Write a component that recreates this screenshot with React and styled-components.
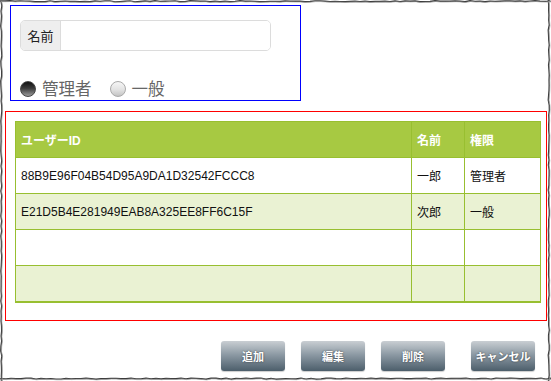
// Imports
import styled, {createGlobalStyle} from 'styled-components'


// Data
const users = [
    {id: '88B9E96F04B54D95A9DA1D32542FCCC8', name: '一郎', role: '管理者'},
    {id: 'E21D5B4E281949EAB8A325EE8FF6C15F', name: '次郎', role: '一般'},
    {id: '', name: '', role: ''},
    {id: '', name: '', role: ''},
]

const buttons = ['追加', '編集', '削除', 'キャンセル']


// Torn paper edge of the screenshot
const jitter = (i, seed) => Math.abs(Math.sin(i * 12.9898 + seed * 78.233) * 43758.5453 % 1)
const tornPath = (w, h) => {
    const pts = []
    const step = 5
    for (let x = 0; x <= w; x += step) pts.push([x, 0.8 + jitter(x, 1) * 1.1])
    for (let y = 0; y <= h; y += step) pts.push([w - 1.6 - jitter(y, 2) * 1.1, y])
    for (let x = w; x >= 0; x -= step) pts.push([x, h - 1.8 - jitter(x, 3) * 1.1])
    for (let y = h; y >= 0; y -= step) pts.push([0.8 + jitter(y, 4) * 1.1, y])
    return 'M' + pts.map(p => p[0].toFixed(1) + ' ' + p[1].toFixed(1)).join(' L') + ' Z'
}


// Styles
const GlobalStyle = createGlobalStyle`
    html, body {
        margin:0;
        padding:0;
        background:#fff;
    }
    * {
        box-sizing:border-box;
    }
`
const Frame = styled.div`
    position:relative;
    width:551px;
    height:381px;
    background:#fff;
    overflow:hidden;
    font-family:"Liberation Sans", "Noto Sans CJK JP", sans-serif;
    padding-top:5px;
`
const Edge = styled.svg`
    position:absolute;
    inset:0;
    pointer-events:none;
`
const FormBox = styled.div`
    margin-left:10px;
    width:291px;
    height:96px;
    border:1px solid #0000ff;
    padding:14px 0 0 9px;
`
const InputGroup = styled.div`
    display:flex;
    width:251px;
    height:31px;
    border:1px solid #dcdcdc;
    border-radius:5px;
    overflow:hidden;
`
const Addon = styled.span`
    display:flex;
    align-items:center;
    justify-content:center;
    width:40px;
    background:#eeeeee;
    border-right:1px solid #dcdcdc;
    font-size:13px;
    color:#222;
`
const TextInput = styled.input`
    flex:1;
    border:none;
    outline:none;
    background:#fff;
`
const RadioRow = styled.div`
    display:flex;
    align-items:center;
    gap:18px;
    margin-top:29px;
    height:18px;
`
const RadioLabel = styled.label`
    display:flex;
    align-items:center;
    gap:6px;
    font-size:16.5px;
    line-height:18px;
    color:#666;
`
const RadioDot = styled.span`
    width:16px;
    height:16px;
    border-radius:50%;
    border:1px solid ${({checked}) => checked ? '#444' : '#aaa'};
    background:${({checked}) => checked
        ? 'linear-gradient(#111 0%, #3a3a3a 45%, #9a9a9a 100%)'
        : 'linear-gradient(#f6f6f6 0%, #e2e2e2 55%, #c4c4c4 100%)'};
`
const ListBox = styled.div`
    margin:10px 0 0 5px;
    width:542px;
    height:210px;
    border:1px solid #ff0000;
    padding:9px 0 0 9px;
`
const Table = styled.table`
    width:525px;
    border-collapse:collapse;
    border:1px solid #b8b8b8;
    table-layout:fixed;
    font-size:12px;
`
const HeadCell = styled.th`
    height:36px;
    padding:0 5px;
    text-align:left;
    color:#fff;
    font-weight:bold;
    background:#a7c942;
    border:1px solid #98bf30;
    width:${({w}) => w}px;
`
const Row = styled.tr`
    background:${({alt}) => alt ? '#eaf2d3' : '#fff'};
`
const Cell = styled.td`
    height:36px;
    padding:0 5px;
    color:#111;
    border:1px solid #98bf30;
    border-bottom-width:${({last}) => last ? 2 : 1}px;
`
const ButtonBar = styled.div`
    display:flex;
    justify-content:flex-end;
    gap:16px;
    margin-top:20px;
    padding-right:16px;
`
const Button = styled.button`
    width:64px;
    height:30px;
    margin-left:${({wide}) => wide ? 10 : 0}px;
    border:none;
    border-radius:3px;
    background:linear-gradient(#c9ced3 0%, #8d9aa4 45%, #4c5e6b 100%);
    color:#fff;
    font-family:"Liberation Sans", "Noto Sans CJK JP", sans-serif;
    font-size:11px;
    font-weight:bold;
    text-shadow:0 0 2px rgba(0,0,0,0.6);
    box-shadow:0 1px 1px rgba(0,0,0,0.2);
    padding:0;
`


// Main Function
const App = () => {
    return (
        <>
            <GlobalStyle />
            <Frame>
                <FormBox>
                    <InputGroup>
                        <Addon>名前</Addon>
                        <TextInput />
                    </InputGroup>
                    <RadioRow>
                        <RadioLabel><RadioDot checked />管理者</RadioLabel>
                        <RadioLabel><RadioDot />一般</RadioLabel>
                    </RadioRow>
                </FormBox>
                <ListBox>
                    <Table>
                        <thead>
                            <tr>
                                <HeadCell w={396}>ユーザーID</HeadCell>
                                <HeadCell w={53}>名前</HeadCell>
                                <HeadCell w={76}>権限</HeadCell>
                            </tr>
                        </thead>
                        <tbody>
                            {users.map((u, i) => (
                                <Row key={i} alt={i % 2 === 1}>
                                    <Cell last={i === users.length - 1}>{u.id}</Cell>
                                    <Cell last={i === users.length - 1}>{u.name}</Cell>
                                    <Cell last={i === users.length - 1}>{u.role}</Cell>
                                </Row>
                            ))}
                        </tbody>
                    </Table>
                </ListBox>
                <ButtonBar>
                    {buttons.map(b => (
                        <Button key={b} wide={b === 'キャンセル'}>{b}</Button>
                    ))}
                </ButtonBar>
                <Edge width="551" height="381" viewBox="0 0 551 381">
                    <path d={tornPath(551, 381)} fill="none" stroke="#3a3a3a" strokeWidth="1.4" />
                    <path d={tornPath(551, 381)} fill="none" stroke="#a0a0a0" strokeWidth="0.7" transform="translate(0.7 0.7)" />
                </Edge>
            </Frame>
        </>
    )
}


// Export
export default App;
